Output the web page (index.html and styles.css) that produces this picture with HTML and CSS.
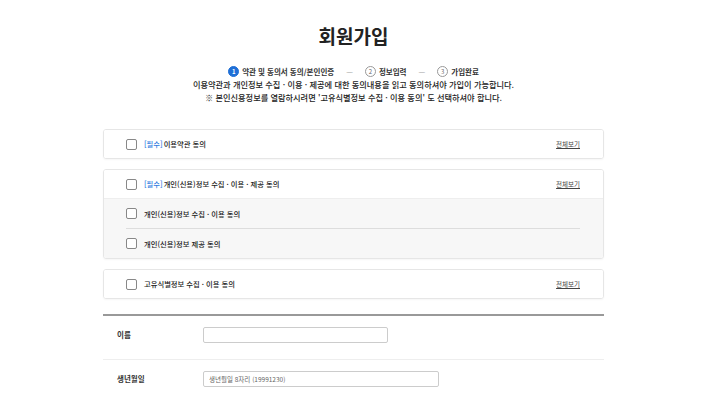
FILE: index.html
```html
<!DOCTYPE html>
<html lang="ko">
<head>
  <meta charset="UTF-8">
  <meta name="viewport" content="width=device-width, initial-scale=1.0">
  <title>회원가입</title>
  <link rel="stylesheet" href="styles.css">
</head>
<body>
  <div class="page">
    <!-- title -->
    <h1 class="title">회원가입</h1>

    <!-- steps -->
    <div class="steps">
      <div class="step active"><span class="step-num">1</span>약관 및 동의서 동의/본인인증</div>
      <span class="step-dash">—</span>
      <div class="step"><span class="step-num">2</span>정보입력</div>
      <span class="step-dash">—</span>
      <div class="step"><span class="step-num">3</span>가입완료</div>
    </div>

    <p class="notice">이용약관과 개인정보 수집 · 이용 · 제공에 대한 동의내용을 읽고 동의하셔야 가입이 가능합니다.<br>※ 본인신용정보를 열람하시려면 '고유식별정보 수집 · 이용 동의' 도 선택하셔야 합니다.</p>

    <!-- agreements -->
    <div class="agree-box">
      <div class="agree-row">
        <label class="check"><span class="box"></span><em>[필수]</em> 이용약관 동의</label>
        <a href="#" class="view-all">전체보기</a>
      </div>
    </div>

    <div class="agree-box">
      <div class="agree-row">
        <label class="check"><span class="box"></span><em>[필수]</em> 개인(신용)정보 수집 · 이용 · 제공 동의</label>
        <a href="#" class="view-all">전체보기</a>
      </div>
      <div class="agree-sub">
        <div class="sub-row">
          <label class="check"><span class="box"></span>개인(신용)정보 수집 · 이용 동의</label>
        </div>
        <div class="sub-row">
          <label class="check"><span class="box"></span>개인(신용)정보 제공 동의</label>
        </div>
      </div>
    </div>

    <div class="agree-box">
      <div class="agree-row">
        <label class="check"><span class="box"></span>고유식별정보 수집 · 이용 동의</label>
        <a href="#" class="view-all">전체보기</a>
      </div>
    </div>

    <!-- form -->
    <div class="form">
      <div class="form-row">
        <div class="form-label">이름</div>
        <input type="text" class="input name">
      </div>
      <div class="form-row">
        <div class="form-label">생년월일</div>
        <input type="text" class="input birth" placeholder="생년월일 8자리 (19991230)">
      </div>
    </div>
  </div>
</body>
</html>
```

FILE: styles.css
```css
body {
  margin: 0;
  padding: 0;
  background: #fff;
  font-family: "Noto Sans CJK KR", "Noto Sans", sans-serif;
  color: #333;
}

.page {
  width: 501px;
  margin-left: 103px;
}

.title {
  margin: 0;
  padding-top: 20px;
  height: 31px;
  font-size: 19px;
  font-weight: 700;
  line-height: 31px;
  color: #222;
  text-align: center;
}

.steps {
  display: flex;
  justify-content: center;
  align-items: center;
  margin-top: 14px;
  height: 12px;
  font-size: 7.5px;
  font-weight: 700;
  color: #333;
}

.step {
  display: flex;
  align-items: center;
}

.step-num {
  display: flex;
  align-items: center;
  justify-content: center;
  width: 9px;
  height: 9px;
  margin-right: 3px;
  border: 1px solid #999;
  border-radius: 50%;
  font-size: 6px;
  font-weight: 400;
  color: #666;
}

.step.active .step-num {
  background: #1f6fd6;
  border-color: #1f6fd6;
  color: #fff;
  font-weight: 700;
}

.step-dash {
  margin: 0 12px;
  color: #999;
  font-weight: 400;
}

.notice {
  margin: 1px 0 25px;
  font-size: 8.2px;
  font-weight: 500;
  line-height: 13px;
  text-align: center;
  color: #222;
}

.agree-box {
  margin-bottom: 10px;
  border: 1px solid #e6e6e6;
  border-radius: 3px;
  box-shadow: 0 1px 2px rgba(0, 0, 0, 0.04);
  overflow: hidden;
}

.agree-row {
  display: flex;
  justify-content: space-between;
  align-items: center;
  height: 28px;
  padding: 0 23px 0 22px;
  background: #fff;
}

.check {
  display: flex;
  align-items: center;
  font-size: 7.3px;
  font-weight: 500;
  color: #222;
}

.check em {
  font-style: normal;
  color: #2f7be0;
  margin-right: 1px;
}

.box {
  width: 9px;
  height: 9px;
  margin-right: 7px;
  border: 1px solid #888;
  border-radius: 2px;
  background: #fff;
}

.view-all {
  font-size: 6.5px;
  color: #444;
  text-decoration: underline;
}

.agree-sub {
  padding: 0 23px 0 22px;
  background: #f7f7f7;
  border-top: 1px solid #eee;
}

.sub-row {
  display: flex;
  align-items: center;
  height: 29px;
}

.sub-row + .sub-row {
  border-top: 1px solid #ddd;
}

.form {
  margin-top: 15px;
  border-top: 2px solid #999;
}

.form-row {
  display: flex;
  align-items: flex-start;
  box-sizing: border-box;
  height: 43px;
  padding: 11px 0 0 14px;
}

.form-row + .form-row {
  border-top: 1px solid #eee;
}

.form-label {
  width: 86px;
  font-size: 7.5px;
  font-weight: 700;
  line-height: 16px;
  color: #333;
}

.input {
  box-sizing: border-box;
  height: 16px;
  margin: 0;
  padding: 0 5px;
  border: 1px solid #ccc;
  border-radius: 2px;
  font-family: "Noto Sans CJK KR", "Noto Sans", sans-serif;
  font-size: 6.5px;
  color: #333;
}

.input::placeholder {
  color: #666;
}

.input.name {
  width: 185px;
}

.input.birth {
  width: 236px;
}
```
